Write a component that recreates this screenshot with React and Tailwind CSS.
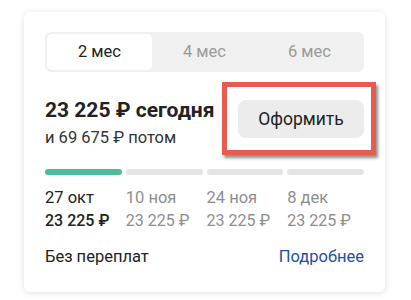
export default function App() {
  const tabs = ["2 мес", "4 мес", "6 мес"];
  const payments = [
    { date: "27 окт", amount: "23 225 ₽", active: true },
    { date: "10 ноя", amount: "23 225 ₽" },
    { date: "24 ноя", amount: "23 225 ₽" },
    { date: "8 дек", amount: "23 225 ₽" },
  ];

  return (
    <div className="w-[411px] h-[300px] bg-white pt-[12px] pl-[24px] font-['Roboto',sans-serif]">
      <div className="w-[361px] h-[280px] bg-white rounded-[6px] shadow-[0_1px_6px_rgba(0,0,0,0.13)] px-[21px] pt-[20px]">
        <div className="grid grid-cols-3 h-[40px] bg-[#f0f0f0] rounded-[6px] p-[2px]">
          {tabs.map((t, i) => (
            <div
              key={t}
              className={
                i === 0
                  ? "flex items-center justify-center bg-white rounded-[5px] text-[16.5px] text-[#222]"
                  : "flex items-center justify-center text-[16.5px] text-[#9a9a9a]"
              }
            >
              {t}
            </div>
          ))}
        </div>

        <div className="flex items-start justify-between mt-[26px] h-[48px]">
          <div>
            <div className="text-[21px] leading-[24px] font-bold text-[#222]">23 225 ₽ сегодня</div>
            <div className="text-[16.5px] leading-[20px] text-[#333] mt-[6px]">и 69 675 ₽ потом</div>
          </div>
          <div className="relative mt-[2px]">
            <div className="w-[126px] h-[38px] bg-[#ececec] rounded-[8px] flex items-center justify-center text-[17.5px] text-[#222]">
              Оформить
            </div>
            <div className="absolute left-[-16px] top-[-18px] right-[-12px] bottom-[-17px] border-[5px] border-[#ea5a4f] shadow-[2px_3px_3px_rgba(0,0,0,0.45)]" />
          </div>
        </div>

        <div className="grid grid-cols-4 gap-[4px] mt-[23px]">
          {payments.map((p) => (
            <div key={p.date}>
              <div className={p.active ? "h-[6px] rounded-full bg-[#4bbd9b]" : "h-[6px] rounded-full bg-[#e4e4e6]"} />
              <div className={p.active ? "mt-[12px] text-[16.5px] leading-[22px] text-[#222]" : "mt-[12px] text-[16.5px] leading-[22px] text-[#8e8e8e]"}>
                {p.date}
              </div>
              <div className={p.active ? "mt-[1px] text-[16px] leading-[22px] font-medium text-[#222]" : "mt-[1px] text-[16px] leading-[22px] text-[#8e8e8e]"}>
                {p.amount}
              </div>
            </div>
          ))}
        </div>

        <div className="flex items-center justify-between mt-[15px] text-[16.5px] leading-[20px]">
          <span className="text-[#222]">Без переплат</span>
          <span className="text-[#1f4ea3]">Подробнее</span>
        </div>
      </div>
    </div>
  );
}
